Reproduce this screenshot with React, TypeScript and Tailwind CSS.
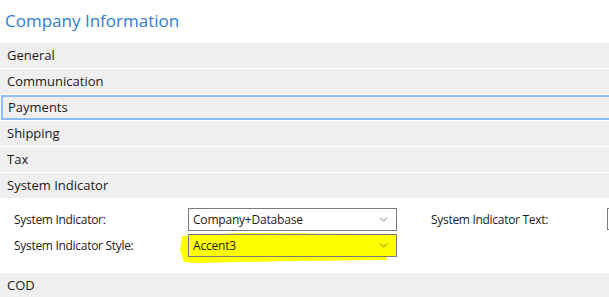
import { ChevronDown } from 'lucide-react';

const sections = ['General', 'Communication', 'Payments', 'Shipping', 'Tax', 'System Indicator'];

function Select({ value, highlight }: { value: string; highlight?: boolean }) {
  return (
    <div
      className={`relative flex h-[23px] w-[209px] shrink-0 items-center justify-between border border-[#7a7a7a] pl-[4px] pr-[6px] text-[12px] tracking-[-0.2px] text-[#1b1b1b] ${
        highlight ? 'bg-[#ffff00]' : 'bg-white'
      }`}
    >
      <span>{value}</span>
      <ChevronDown size={13} strokeWidth={1.3} className="text-[#444]" />
    </div>
  );
}

export default function App() {
  return (
    <div className="h-[297px] w-[609px] overflow-hidden bg-white font-['Segoe_UI','Open_Sans',sans-serif]">
      <div className="flex h-[43px] items-center pl-[5px] pb-[2px] text-[17px] text-[#2f7bd4]">Company Information</div>

      {sections.map((s) =>
        s === 'Payments' ? (
          <div
            key={s}
            className="mb-px ml-px mr-[-6px] flex h-[25px] items-center border-2 border-[#8cbcff] bg-[#efefef] pl-[5px] text-[13px] text-[#1b1b1b]"
          >
            {s}
          </div>
        ) : (
          <div key={s} className="mb-px flex h-[25px] items-center bg-[#efefef] pl-[7px] text-[13px] text-[#1b1b1b]">
            {s}
          </div>
        )
      )}

      <div className="-mt-px flex h-[75px] bg-white pt-[10px] text-[12px] tracking-[-0.3px] text-[#1b1b1b]">
        <div className="flex w-[188px] shrink-0 flex-col gap-[3px] pl-[14px]">
          <div className="flex h-[23px] items-center">System Indicator:</div>
          <div className="flex h-[23px] items-center">System Indicator Style:</div>
        </div>
        <div className="relative flex shrink-0 flex-col gap-[3px]">
          <svg className="absolute left-[-10px] top-[22px] h-[34px] w-[220px]" viewBox="0 0 220 34">
            <path
              d="M4 6 L60 3 L209 4 L209 30 L120 31 L60 32 L20 33 L6 32 L2 20 Z"
              fill="#ffff00"
            />
          </svg>
          <Select value="Company+Database" />
          <Select value="Accent3" highlight />
        </div>
        <div className="ml-[34px] flex h-[23px] w-[176px] shrink-0 items-center">System Indicator Text:</div>
        <div className="h-[22px] w-[10px] shrink-0 border border-[#7a7a7a]" />
      </div>

      <div className="flex h-[25px] items-center bg-[#efefef] pl-[7px] text-[13px] text-[#1b1b1b]">COD</div>
    </div>
  );
}
